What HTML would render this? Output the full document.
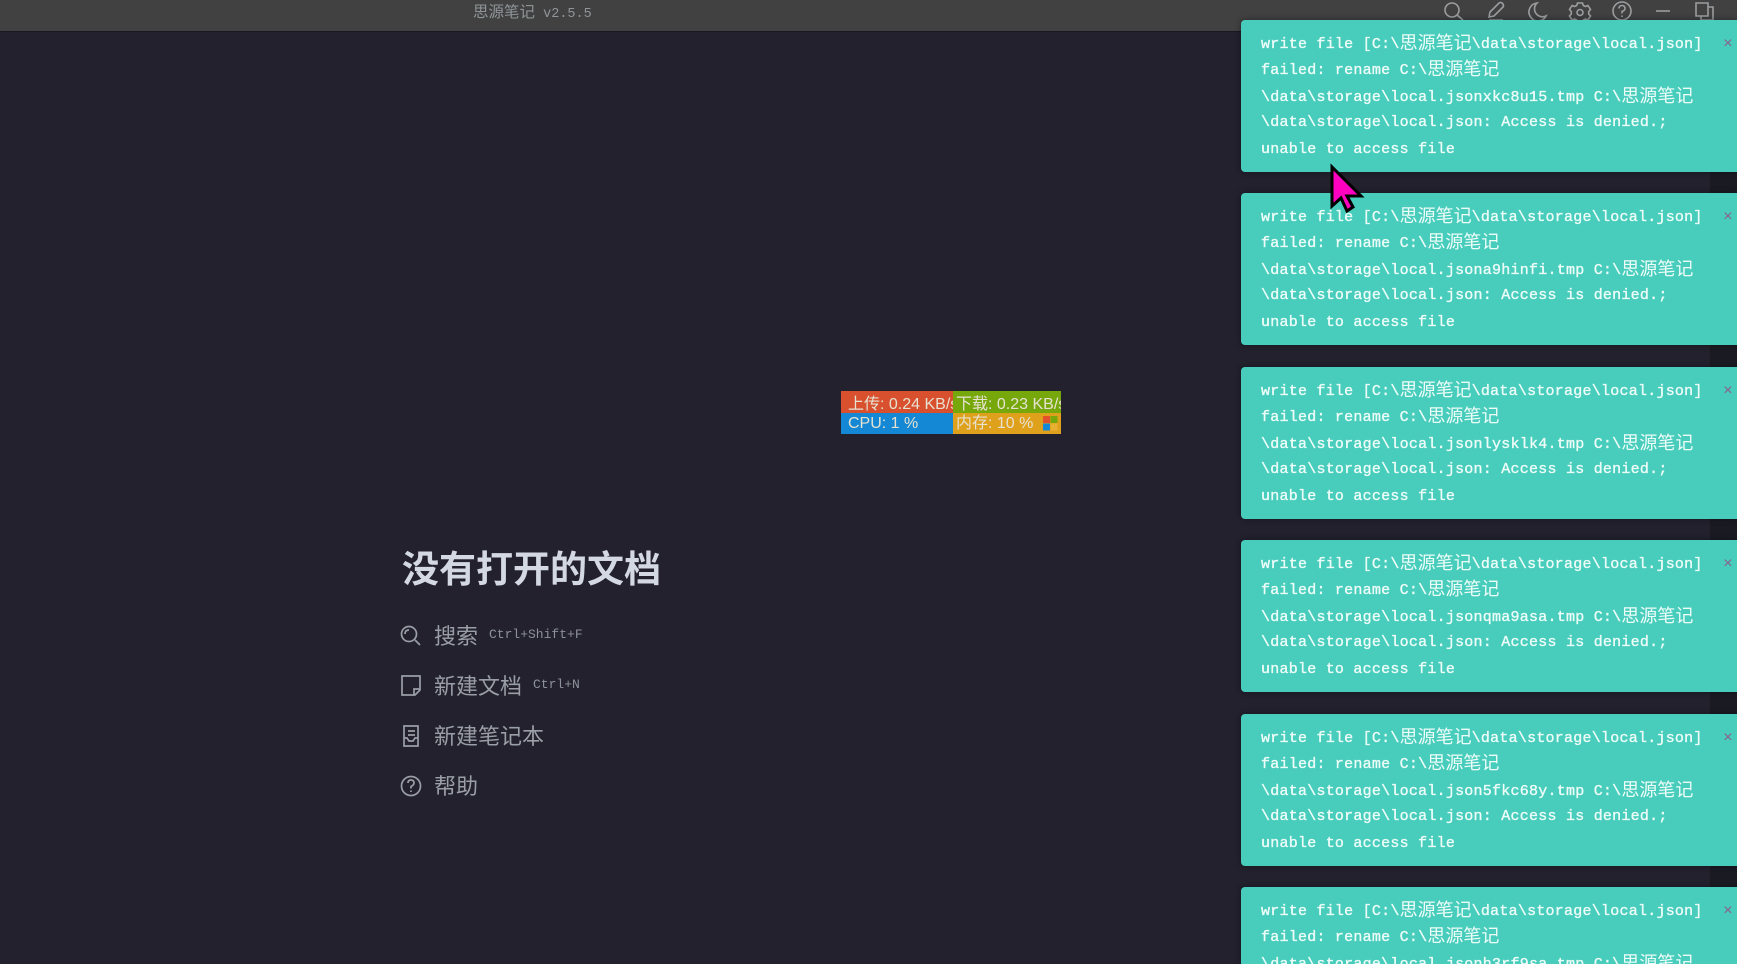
<!DOCTYPE html>
<html><head><meta charset="utf-8"><style>
html,body{margin:0;padding:0;width:1737px;height:964px;overflow:hidden;background:#22212d}
#wrap{position:relative;width:1737px;height:964px;overflow:hidden;background:#22212d}
.abs,.card,.m,.k{position:absolute}
.bar{left:0;top:0;width:1737px;height:32px;background:#414141;border-bottom:1px solid #18181f;box-sizing:border-box}
.title{left:473px;top:0;color:#8f9598;font:13.500px/22px "Liberation Mono","Noto Sans CJK SC",monospace;white-space:nowrap}
.title i{font:normal 15.500px/22px "Noto Sans CJK SC",sans-serif}
.card{left:1241px;width:496px;height:152px;background:#48cdbd;border-radius:4px 0 0 4px;padding-top:10.500px;box-sizing:border-box;color:#eefcf8;font:15px/26.600px "Liberation Mono","Noto Sans CJK SC",monospace;letter-spacing:.24px;box-shadow:0 0 6px rgba(10,10,15,.5);overflow:hidden}
.card div{height:26.600px;padding-left:20px;white-space:nowrap;-webkit-text-stroke:.35px #eefcf8}
.card i{font:normal 18px/20px "Noto Sans CJK SC",sans-serif;-webkit-text-stroke:0;letter-spacing:0;position:relative;top:1px}
.card b{position:absolute;left:482px;top:16px;width:10px;height:16px;font:normal 16px/16px "Liberation Sans",sans-serif;color:#8d5f85;text-align:center}
.h{left:402px;top:541px;color:#d4d8e2;font:bold 37px/50px "Noto Sans CJK SC",sans-serif;white-space:nowrap}
.m{left:434px;color:#9a9ea6;font:22px/30px "Noto Sans CJK SC",sans-serif;white-space:nowrap}
.k{color:#8d9199;font:13px/20px "Liberation Mono",monospace}
.w{font:16px/20px "Liberation Sans","Noto Sans CJK SC",sans-serif;color:#e6e1d0;white-space:nowrap;overflow:hidden;box-sizing:border-box}
svg{position:absolute;overflow:visible}
</style></head><body><div id="wrap">
<div class="abs" style="left:1710px;top:172px;width:27px;height:792px;background:#1a1a22"></div>
<div class="abs bar"></div>
<div class="abs title"><i>思源笔记</i> v2.5.5</div>

<svg style="left:0;top:0" width="1737" height="32" fill="none" stroke="#9b9d9f" stroke-width="1.600">
<circle cx="1452" cy="10" r="7"/><path d="M1457 15l6 5"/>
<path d="M1489 17l1-5 9-9q2-1 3 0l1 1q1 2 0 3l-9 9zM1489 20h14"/>
<path d="M1537 3a9 9 0 1 0 9 13a8 8 0 0 1-9-13z"/>
<path d="M1577.500 3h5l.8 2.500 2.200 1 2.400-1 2.600 4-1.800 2v2.500l1.800 2-2.600 4-2.400-1-2.200 1-.8 2.500h-5l-.8-2.500-2.200-1-2.400 1-2.600-4 1.800-2V11.500l-1.800-2 2.600-4 2.400 1 2.200-1z"/><circle cx="1580" cy="12.500" r="3"/>
<circle cx="1622" cy="11" r="9"/><path d="M1619 8.500q0-3 3-3t3 3q0 2-3 3v2M1622 15.500v1.500"/>
<path d="M1656 11h14"/>
<path d="M1696 3h12v13h-12zM1708 7h5v13h-12v-4"/>
</svg>

<div class="abs h">没有打开的文档</div>
<div class="m" style="top:620px">搜索</div><div class="k" style="left:489px;top:625px">Ctrl+Shift+F</div>
<div class="m" style="top:670px">新建文档</div><div class="k" style="left:533px;top:675px">Ctrl+N</div>
<div class="m" style="top:720px">新建笔记本</div>
<div class="m" style="top:770px">帮助</div>
<svg style="left:0;top:0" width="440" height="800" fill="none" stroke="#9a9ea6" stroke-width="1.700">
<circle cx="409" cy="634" r="7.500"/><path d="M415 640l5 5M405 634q0-4 4-4"/>
<path d="M402 676h18v14l-5 5h-13zM420 689h-6v6"/>
<path d="M404 726h14v20h-14zM404 738h3l2 3h4l2-3h3M408 731h7M408 735h7"/>
<circle cx="411" cy="786" r="9.500"/><path d="M408 783q0-3 3-3t3 3q0 2-3 3.500v2M411 790.500v1.500"/>
</svg>

<div class="abs w" style="left:841px;top:391px;width:112px;height:22px;background:#d9502f;padding:4px 0 0 7px">上传: 0.24 KB/s</div>
<div class="abs w" style="left:953px;top:391px;width:108px;height:22px;background:#76a80c;padding:4px 0 0 3px">下载: 0.23 KB/s</div>
<div class="abs w" style="left:841px;top:413px;width:112px;height:21px;background:#1488d4;padding:1px 0 0 7px">CPU: 1 %</div>
<div class="abs w" style="left:953px;top:413px;width:108px;height:21px;background:#dfa01c;padding:1px 0 0 3px">内存: 10 %</div>
<svg style="left:1043px;top:416px" width="15" height="14"><rect width="7" height="7" fill="#e2502c"/><rect x="7.500" width="7" height="7" fill="#76a80c"/><rect y="7.500" width="7" height="7" fill="#1488d4"/><rect x="7.500" y="7.500" width="7" height="7" fill="#e8b030"/></svg>

<div class="card" style="top:20px"><b>×</b><div>write file [C:\<i>思源笔记</i>\data\storage\local.json]</div><div>failed: rename C:\<i>思源笔记</i></div><div>\data\storage\local.jsonxkc8u15.tmp C:\<i>思源笔记</i></div><div>\data\storage\local.json: Access is denied.;</div><div>unable to access file</div></div>
<div class="card" style="top:193px"><b>×</b><div>write file [C:\<i>思源笔记</i>\data\storage\local.json]</div><div>failed: rename C:\<i>思源笔记</i></div><div>\data\storage\local.jsona9hinfi.tmp C:\<i>思源笔记</i></div><div>\data\storage\local.json: Access is denied.;</div><div>unable to access file</div></div>
<div class="card" style="top:367px"><b>×</b><div>write file [C:\<i>思源笔记</i>\data\storage\local.json]</div><div>failed: rename C:\<i>思源笔记</i></div><div>\data\storage\local.jsonlysklk4.tmp C:\<i>思源笔记</i></div><div>\data\storage\local.json: Access is denied.;</div><div>unable to access file</div></div>
<div class="card" style="top:540px"><b>×</b><div>write file [C:\<i>思源笔记</i>\data\storage\local.json]</div><div>failed: rename C:\<i>思源笔记</i></div><div>\data\storage\local.jsonqma9asa.tmp C:\<i>思源笔记</i></div><div>\data\storage\local.json: Access is denied.;</div><div>unable to access file</div></div>
<div class="card" style="top:714px"><b>×</b><div>write file [C:\<i>思源笔记</i>\data\storage\local.json]</div><div>failed: rename C:\<i>思源笔记</i></div><div>\data\storage\local.json5fkc68y.tmp C:\<i>思源笔记</i></div><div>\data\storage\local.json: Access is denied.;</div><div>unable to access file</div></div>
<div class="card" style="top:887px;height:77px;border-radius:4px 0 0 0"><b>×</b><div>write file [C:\<i>思源笔记</i>\data\storage\local.json]</div><div>failed: rename C:\<i>思源笔记</i></div><div style="height:14px;overflow:hidden">\data\storage\local.jsonh3rf9sa.tmp C:\<i>思源笔记</i></div></div>

<svg style="left:0;top:0" width="1737" height="964"><path d="M1332 167L1332 206L1341 198L1347 211L1353 207L1347 196L1361 196Z" fill="#ff00c0" stroke="#000" stroke-width="3" stroke-linejoin="miter"/></svg>
</div></body></html>
